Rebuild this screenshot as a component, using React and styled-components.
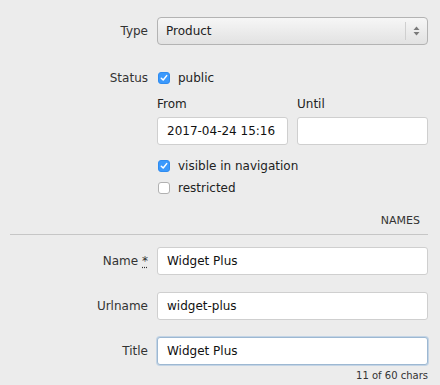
import React from 'react';
import styled, { createGlobalStyle } from 'styled-components';

const Global = createGlobalStyle`
  body {
    margin: 0;
    background: #ececec;
    font-family: "DejaVu Sans", "Liberation Sans", sans-serif;
    font-size: 12px;
    color: #333;
  }
`;

const Form = styled.div`
  padding: 17px 12px 0 10px;
  display: flex;
  flex-direction: column;
`;

const Row = styled.div`
  display: grid;
  grid-template-columns: 138px 1fr;
  column-gap: 9px;
  align-items: ${(p) => (p.$top ? 'start' : 'center')};
  margin-bottom: ${(p) => p.$mb || 0}px;
`;

const Label = styled.label`
  text-align: right;
  line-height: 16px;
  color: #333;
  abbr {
    text-decoration: underline dotted;
    text-underline-offset: 2px;
  }
`;

const Select = styled.div`
  position: relative;
  height: 28px;
  box-sizing: border-box;
  border: 1px solid #b3b3b3;
  border-radius: 4px;
  background: linear-gradient(#f6f6f6, #e2e2e2);
  display: flex;
  align-items: center;
  padding-left: 8px;
  color: #222;
`;

const SelectArrows = styled.div`
  margin-left: auto;
  width: 21px;
  height: 18px;
  border-left: 1px solid #cfcfcf;
  display: flex;
  align-items: center;
  justify-content: center;
`;

const Field = styled.div`
  display: flex;
  flex-direction: column;
`;

const CheckLine = styled.div`
  display: flex;
  align-items: center;
  gap: 8px;
  height: 16px;
  padding-left: 1px;
  margin-bottom: ${(p) => p.$mb || 0}px;
  color: #222;
`;

const Box = styled.span`
  width: 12px;
  height: 12px;
  box-sizing: border-box;
  border-radius: 3px;
  display: flex;
  align-items: center;
  justify-content: center;
  background: ${(p) => (p.$checked ? '#3b99fc' : '#fff')};
  border: 1px solid ${(p) => (p.$checked ? '#2f8cf0' : '#b1b1b1')};
`;

const Dates = styled.div`
  display: grid;
  grid-template-columns: 1fr 1fr;
  column-gap: 9px;
  margin: 10px 0 13px;
`;

const DateCol = styled.div`
  display: flex;
  flex-direction: column;
  gap: 5px;
`;

const SubLabel = styled.span`
  line-height: 16px;
  color: #222;
`;

const Input = styled.div`
  height: 28px;
  box-sizing: border-box;
  background: #fff;
  border: 1px solid ${(p) => (p.$focus ? '#9db8d2' : '#cfcfcf')};
  box-shadow: ${(p) => (p.$focus ? '0 0 0 1px #c3d4e5' : 'none')};
  border-radius: 3px;
  display: flex;
  align-items: center;
  padding-left: 9px;
  color: #111;
  white-space: nowrap;
  overflow: hidden;
`;

const SectionHead = styled.div`
  display: flex;
  flex-direction: column;
  margin: 18px 0 12px;
`;

const SectionTitle = styled.div`
  text-align: right;
  font-size: 11px;
  color: #333;
  padding-right: 8px;
  line-height: 14px;
  margin-bottom: 6px;
`;

const Rule = styled.hr`
  border: 0;
  border-top: 1px solid #c6c6c6;
  margin: 0;
`;

const Hint = styled.div`
  text-align: right;
  font-size: 10px;
  color: #333;
  margin-top: 5px;
`;

const Check = ({ checked }) => (
  <Box $checked={checked}>
    {checked && (
      <svg width="8" height="8" viewBox="0 0 8 8">
        <path d="M1.3 4.2 L3.2 6 L6.7 1.6" fill="none" stroke="#fff" strokeWidth="1.5" strokeLinecap="round" strokeLinejoin="round" />
      </svg>
    )}
  </Box>
);

export default function App() {
  return (
    <>
      <Global />
      <Form>
        <Row $mb={25}>
          <Label>Type</Label>
          <Select>
            Product
            <SelectArrows>
              <svg width="7" height="10" viewBox="0 0 7 10">
                <path d="M3.5 0.5 L6.5 4 L0.5 4 Z" fill="#7a7a7a" />
                <path d="M3.5 9.5 L6.5 6 L0.5 6 Z" fill="#7a7a7a" />
              </svg>
            </SelectArrows>
          </Select>
        </Row>

        <Row $top>
          <Label>Status</Label>
          <Field>
            <CheckLine>
              <Check checked />
              public
            </CheckLine>
            <Dates>
              <DateCol>
                <SubLabel>From</SubLabel>
                <Input>2017-04-24 15:16</Input>
              </DateCol>
              <DateCol>
                <SubLabel>Until</SubLabel>
                <Input />
              </DateCol>
            </Dates>
            <CheckLine $mb={6}>
              <Check checked />
              visible in navigation
            </CheckLine>
            <CheckLine>
              <Check />
              restricted
            </CheckLine>
          </Field>
        </Row>

        <SectionHead>
          <SectionTitle>NAMES</SectionTitle>
          <Rule />
        </SectionHead>

        <Row $mb={17}>
          <Label>
            Name <abbr title="required">*</abbr>
          </Label>
          <Input>Widget Plus</Input>
        </Row>
        <Row $mb={17}>
          <Label>Urlname</Label>
          <Input>widget-plus</Input>
        </Row>
        <Row>
          <Label>Title</Label>
          <Field>
            <Input $focus>Widget Plus</Input>
          </Field>
        </Row>
        <Row>
          <span />
          <Hint>11 of 60 chars</Hint>
        </Row>
      </Form>
    </>
  );
}
